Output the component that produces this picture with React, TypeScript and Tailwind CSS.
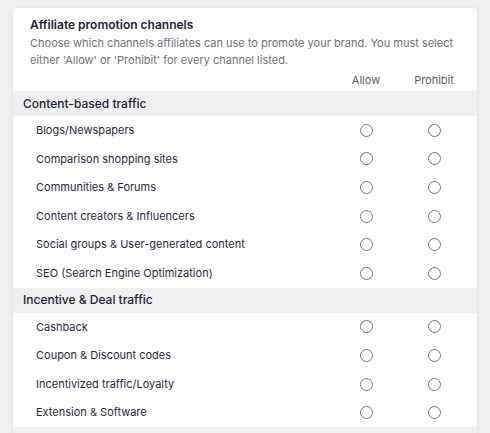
const sections = [
  {
    title: 'Content-based traffic',
    items: [
      'Blogs/Newspapers',
      'Comparison shopping sites',
      'Communities & Forums',
      'Content creators & Influencers',
      'Social groups & User-generated content',
      'SEO (Search Engine Optimization)',
    ],
  },
  {
    title: 'Incentive & Deal traffic',
    items: [
      'Cashback',
      'Coupon & Discount codes',
      'Incentivized traffic/Loyalty',
      'Extension & Software',
    ],
  },
]

function Radio() {
  return (
    <span className="block w-[13px] h-[13px] rounded-full border border-[#6b7785] bg-white" />
  )
}

export default function App() {
  return (
    <div
      className="h-screen bg-[#f0f0f0] pt-[8px] px-[13px] overflow-hidden"
      style={{ fontFamily: 'Inter, "Noto Sans", sans-serif' }}
    >
      <div className="bg-white rounded-[4px] shadow-[0_0_4px_rgba(0,0,0,0.08)] pb-[4px]">
        <div className="px-[17px] pt-[8px]">
          <h2 className="text-[12px] leading-[18px] font-semibold text-[#1b2337]">
            Affiliate promotion channels
          </h2>
          <p className="mt-[1px] text-[11px] leading-[17px] text-[#6b7280]">
            Choose which channels affiliates can use to promote your brand. You must select either 'Allow' or 'Prohibit' for every channel listed.
          </p>
        </div>
        <div className="grid grid-cols-[1fr_68px_68px] pr-[9px] pt-[1px] h-[22px] items-center text-[11px] text-[#545d6b]">
          <span />
          <span className="text-center">Allow</span>
          <span className="text-center">Prohibit</span>
        </div>
        {sections.map(section => (
          <div key={section.title}>
            <div className="bg-[#f0f0f0] h-[25px] flex items-center px-[10px] text-[12px] font-medium text-[#1b2337]">
              {section.title}
            </div>
            {section.items.map(item => (
              <div
                key={item}
                className="grid grid-cols-[1fr_68px_68px] pr-[9px] h-[28.6px] items-center"
              >
                <span className="pl-[23px] text-[11px] text-[#1f2a44]">{item}</span>
                <span className="flex justify-center"><Radio /></span>
                <span className="flex justify-center"><Radio /></span>
              </div>
            ))}
          </div>
        ))}
        <div className="bg-[#f0f0f0] h-[25px]" />
      </div>
    </div>
  )
}
